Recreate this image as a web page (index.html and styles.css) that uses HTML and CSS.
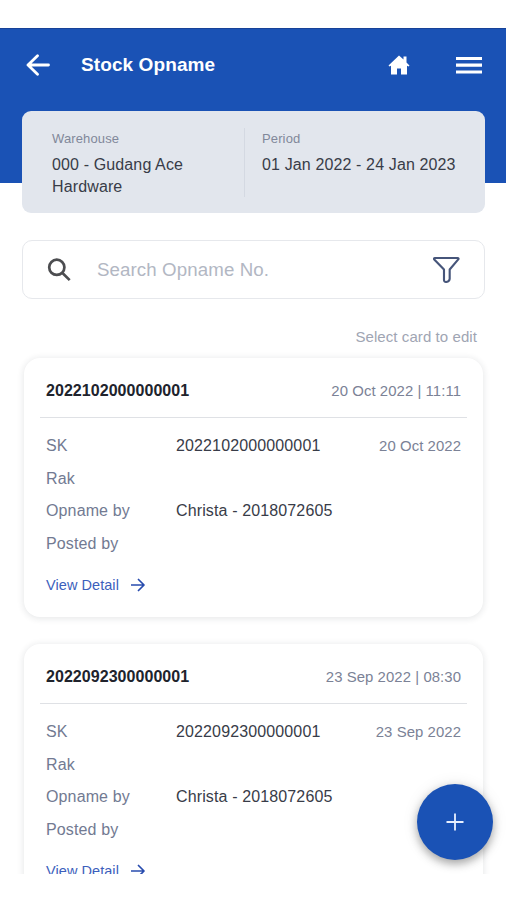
FILE: index.html
```html
<!DOCTYPE html>
<html lang="en">
<head>
<meta charset="utf-8">
<meta name="viewport" content="width=device-width, initial-scale=1">
<title>Stock Opname</title>
<link rel="stylesheet" href="styles.css">
</head>
<body>
<div class="screen">
  <header class="header">
    <svg class="back" viewBox="0 0 24 22" width="24" height="22"><path d="M22.500 11H2M11.500 1.800L2 11l9.500 9.200" /></svg>
    <h1 class="title">Stock Opname</h1>
    <svg class="home" viewBox="0 0 22 20" width="22" height="20"><path d="M11 .5L.5 10.500l1 1.100L3 10.800V19.500h6v-6h4v6h6V10.800l1.500.8 1-1.100-3-3V1.500h-3v3z" /></svg>
    <svg class="menu" viewBox="0 0 26 20" width="26" height="20"><path d="M0 3.500h26M0 10.200h26M0 17h26" /></svg>
  </header>
  <section class="summary">
    <div class="warehouse"><div class="caption">Warehouse</div><div class="info">000 - Gudang Ace<br>Hardware</div></div>
    <div class="period"><div class="caption">Period</div><div class="info">01 Jan 2022 - 24 Jan 2023</div></div>
  </section>
  <div class="search">
    <svg class="lens" viewBox="0 0 24 24" width="24" height="24"><circle cx="9.800" cy="9.300" r="7.600" /><path d="M15.200 14.800l7.500 7.300" /></svg>
    <span class="placeholder">Search Opname No.</span>
    <svg class="filter" viewBox="0 0 28 28" width="27" height="28"><path d="M2 1.500h23.500c1 0 1.200.8.700 1.500L17.300 13.500v9.500c0 1.600-1.400 3-3.500 3.400-1.600.2-2.400-.6-2.400-2V13.500L1.300 3C.8 2.200 1 1.500 2 1.500z" /></svg>
  </div>
  <p class="hint">Select card to edit</p>
  <article class="card">
    <div class="card-head"><strong>2022102000000001</strong><span class="date">20 Oct 2022 | 11:11</span></div>
    <div class="rows">
      <span class="label">SK</span><span>2022102000000001</span><span class="date">20 Oct 2022</span>
      <span class="label">Rak</span><span></span><span></span>
      <span class="label">Opname by</span><span>Christa - 2018072605</span><span></span>
      <span class="label">Posted by</span><span></span><span></span>
    </div>
    <div class="detail"><span>View Detail</span><svg viewBox="0 0 14 14" width="14" height="14"><path d="M.5 7h12M7.500 1.500L13 7l-5.500 5.500" /></svg></div>
  </article>
  <article class="card">
    <div class="card-head"><strong>2022092300000001</strong><span class="date">23 Sep 2022 | 08:30</span></div>
    <div class="rows">
      <span class="label">SK</span><span>2022092300000001</span><span class="date">23 Sep 2022</span>
      <span class="label">Rak</span><span></span><span></span>
      <span class="label">Opname by</span><span>Christa - 2018072605</span><span></span>
      <span class="label">Posted by</span><span></span><span></span>
    </div>
    <div class="detail"><span>View Detail</span><svg viewBox="0 0 14 14" width="14" height="14"><path d="M.5 7h12M7.500 1.500L13 7l-5.500 5.500" /></svg></div>
  </article>
  <div class="fab"><svg viewBox="0 0 18 18" width="18" height="18"><path d="M9 .5v17M.5 9h17" /></svg></div>
</div>
</body>
</html>
```
FILE: styles.css
```css
* { box-sizing: border-box; }
body {
  margin: 0;
  height: 900px;
  overflow: hidden;
  background: #fff;
  color: #383c48;
  font: 16px/20px "Liberation Sans", Arial, sans-serif;
  letter-spacing: .13px;
  white-space: nowrap;
}
svg { display: block; flex: none; fill: none; stroke-linecap: round; stroke-linejoin: round; }
.screen { position: relative; height: 874px; padding-top: 28px; overflow: hidden; }
.header {
  display: flex;
  align-items: center;
  height: 155px;
  padding: 0 24px 83px 26px;
  background: #1a52b5;
  border-top: 1px solid #174298;
  color: #fff;
}
.back { stroke: #fff; stroke-width: 2.8; }
.title { margin: 0 auto 0 31px; font-size: 19px; line-height: 24px; letter-spacing: .1px; }
.home { margin-right: 46px; fill: #fff; }
.menu { stroke: #fff; stroke-width: 3.2; stroke-linecap: butt; }
.summary {
  display: flex;
  height: 102px;
  margin: -72px 21px 0 22px;
  padding: 17px 0 16px 30px;
  border-radius: 9px;
  background: #e2e6ed;
}
.warehouse { width: 193px; border-right: 1px solid #d4d9e2; }
.period { padding-left: 17px; }
.caption { color: #81889a; font-size: 13px; line-height: 22px; }
.info { margin-top: 4px; line-height: 22px; }
.search {
  display: flex;
  align-items: center;
  height: 59px;
  margin: 27px 21px 0 22px;
  padding: 0 24px;
  border: 1px solid #e6e8ec;
  border-radius: 10px;
}
.lens { stroke: #4c4d50; stroke-width: 2.7; stroke-linecap: butt; }
.placeholder { margin: 0 auto 0 26px; color: #b2b7c3; font-size: 18.7px; letter-spacing: .1px; }
.filter { stroke: #46557a; stroke-width: 2.2; }
.hint { margin: 28px 29px 11px; color: #a0a5b3; font-size: 15px; letter-spacing: .08px; text-align: right; }
.card {
  height: 259px;
  margin: 0 23px 27px 24px;
  padding: 0 16px;
  border-radius: 16px;
  background: #fff;
  box-shadow: 0 1px 6px 1px rgba(30, 35, 45, .1);
}
.card-head {
  display: flex;
  align-items: center;
  justify-content: space-between;
  height: 60px;
  padding: 6px 6px 0;
  border-bottom: 1px solid #dfe1e5;
}
.card-head strong { color: #20232c; letter-spacing: .05px; }
.date { color: #7b8296; font-size: 14.900px; letter-spacing: .07px; text-align: right; }
.rows {
  display: grid;
  grid-template-columns: 130px 1fr auto;
  grid-auto-rows: 32.500px;
  align-items: center;
  padding: 12px 6px 0;
}
.label { color: #727a92; }
.detail { display: flex; align-items: center; gap: 12px; padding: 16px 6px 0; color: #3c5fbc; font-size: 14.500px; line-height: 18px; letter-spacing: .06px; }
.detail svg { stroke: #284cae; stroke-width: 1.7; }
.fab {
  position: absolute;
  right: 13px;
  bottom: 14px;
  display: grid;
  place-items: center;
  width: 76px;
  height: 76px;
  border-radius: 50%;
  background: #1a52b5;
  box-shadow: 0 4px 9px rgba(0, 0, 0, .3), 0 1px 16px rgba(0, 0, 0, .1);
}
.fab svg { stroke: #e8f0ff; stroke-width: 1.8; stroke-linecap: butt; }
```
